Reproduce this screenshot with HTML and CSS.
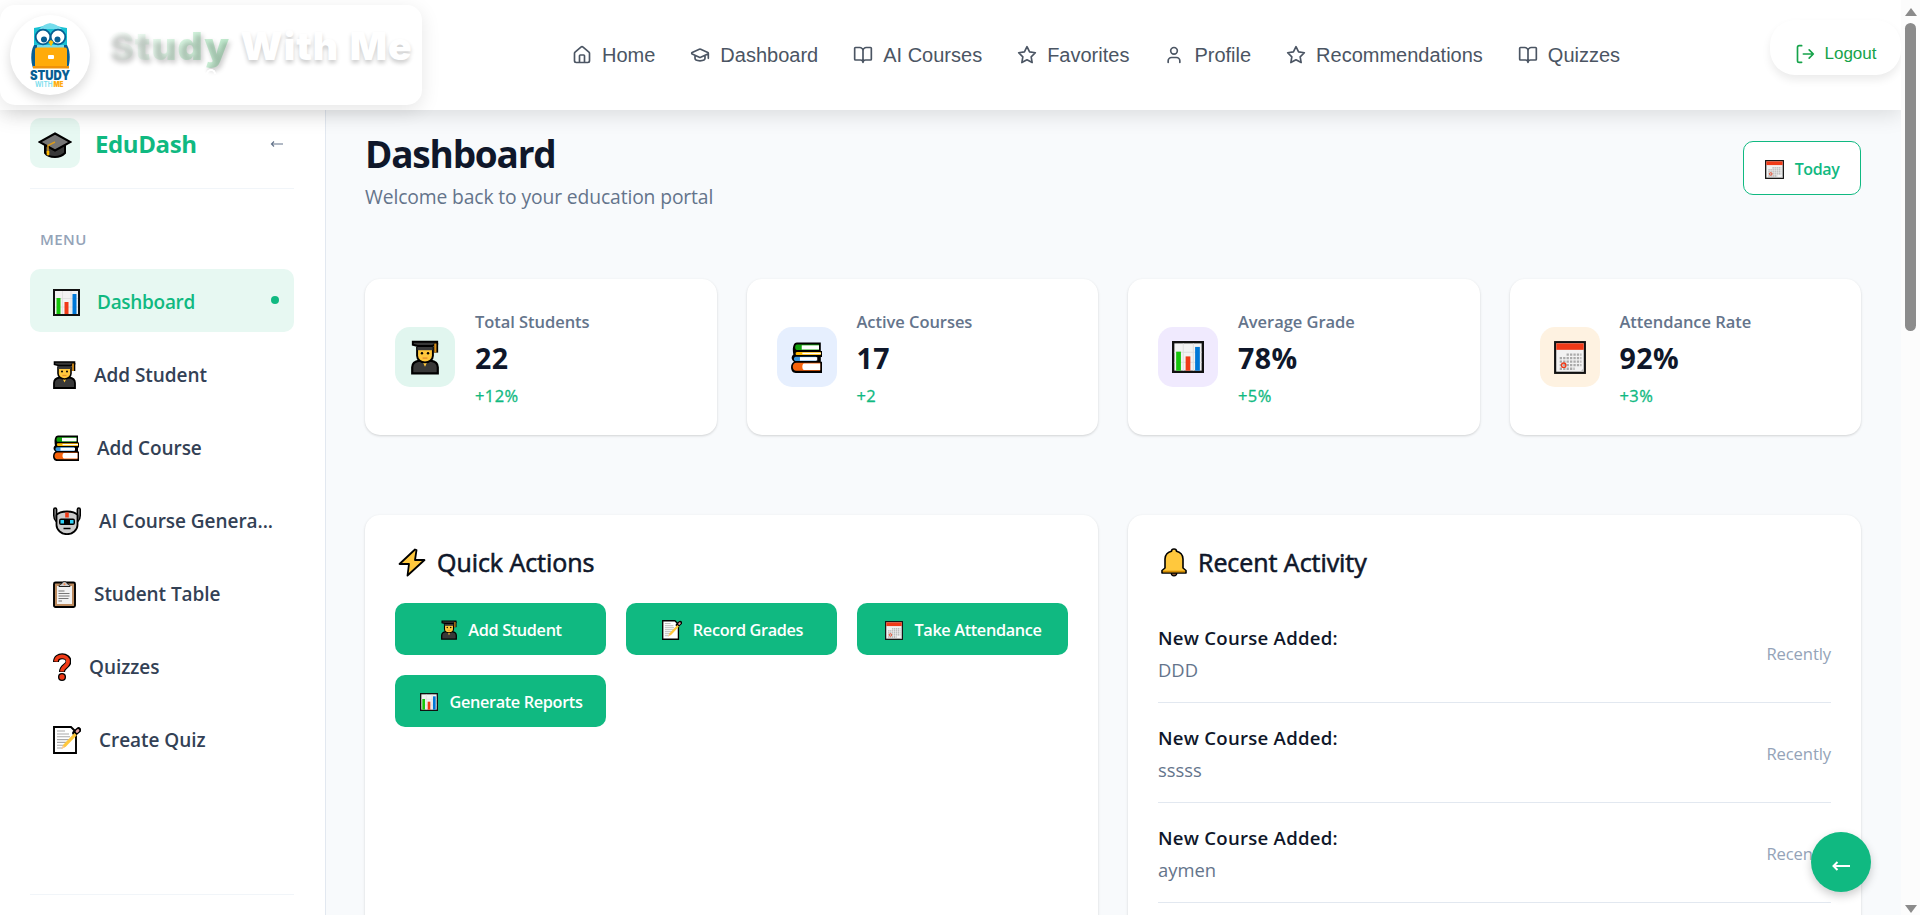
FILE: index.html
```html
<!DOCTYPE html>
<html lang="en">
<head>
<meta charset="utf-8">
<title>Study With Me - Dashboard</title>
<link rel="stylesheet" href="styles.css">
</head>
<body>
<svg class="sprite" width="0" height="0" aria-hidden="true">
  <symbol id="chart" viewBox="0 0 27 27" preserveAspectRatio="none">
    <rect x="1" y="1" width="25" height="25" fill="#f2f2f2" stroke="#111" stroke-width="2"/>
    <path d="M9.500 2v23M18 2v23M2 9.500h23M2 18h23" stroke="#ddd" stroke-width=".8"/>
    <rect x="3.500" y="9" width="4" height="16" fill="#16c60c"/><rect x="11.500" y="13" width="4" height="12" fill="#f03a17"/><rect x="19.500" y="5" width="4" height="20" fill="#0078d7"/>
  </symbol>
  <symbol id="student" viewBox="0 0 23 28">
    <path d="M1 27v-5c0-3 2.500-5 6-5.500h9c3.500.5 6 2.500 6 5.500v5z" fill="#383838" stroke="#000" stroke-width="1.800"/>
    <path d="M9 16.500h5l-2.500 5z" fill="#ffc83d"/>
    <path d="M5 6h13v6.500c0 3-3 5.500-6.500 5.500S5 15.500 5 12.500z" fill="#ffc83d" stroke="#000" stroke-width="1.600"/>
    <path d="M5.200 8V4h12.600v4z" fill="#383838"/>
    <path d="M1.500 1h20v2l-4 1.500h-12l-4-1z" fill="#383838" stroke="#000" stroke-width="1.600"/>
    <path d="M20.500 2v8" stroke="#000" stroke-width="3.600"/><path d="M20 2.500V10" stroke="#d8901c" stroke-width="1.800"/>
    <circle cx="9" cy="10.500" r="1" fill="#000"/><circle cx="14" cy="10.500" r="1" fill="#000"/><path d="M9.500 14.500h4" stroke="#e8912d" stroke-width="1.200"/>
  </symbol>
  <symbol id="books" viewBox="0 0 26 26" preserveAspectRatio="none">
    <path d="M5 .5h20v7h1v5h-1v4h1V26H4c-5 0-5-8-1.500-9.500C0 15 0 12 2 10.500 1 6.500 1.500.5 5 .5z" fill="#000"/>
    <path d="M5 2.200h18.500v4.600H5c-2 0-2-4.600 0-4.600z" fill="#13a10e"/><path d="M9 2.800h14.500v3.500H9z" fill="#fff"/>
    <path d="M5 8.300h20v2.700H5c-1.500 0-1.500-2.700 0-2.700z" fill="#ffb900"/><path d="M9.500 9h15.500v1.200H9.500z" fill="#fff"/>
    <path d="M4 12.300h17v3.600H4c-2 0-2-3.600 0-3.600z" fill="#3a96dd"/><path d="M7.500 12.700h14.500v2.900H7.500z" fill="#fff"/>
    <path d="M4.500 17.400h20v6.800H4.500c-4 0-4-6.800 0-6.800z" fill="#f7630c"/><path d="M11 18h13.500v5.400H11c-2 0-2-5.400 0-5.400z" fill="#fff"/>
  </symbol>
  <symbol id="robot" viewBox="0 0 28 28">
    <path d="M2.200 2.500v6c0 3 1 4 2 5M25.800 2.500v6c0 3-1 4-2 5" fill="none" stroke="#000" stroke-width="4.400" stroke-linecap="round"/>
    <path d="M2.200 2.500v6c0 3 1 4 2 5M25.800 2.500v6c0 3-1 4-2 5" fill="none" stroke="#767676" stroke-width="1.600" stroke-linecap="round"/>
    <path d="M3.500 8c2-2.500 5-3.500 10.500-3.500S22.500 5.500 24.500 8v10c0 5-5 9.200-10.500 9.200S3.500 23 3.500 18z" fill="#ccc" stroke="#000" stroke-width="1.800"/>
    <rect x="12.200" y="5.500" width="3.600" height="5" fill="#f03a17"/>
    <rect x="6" y="11.500" width="16" height="6.500" rx="2" fill="#000"/><rect x="7.500" y="13" width="3.500" height="3.500" fill="#31d2f7"/><rect x="17" y="13" width="3.500" height="3.500" fill="#31d2f7"/>
    <path d="M10.500 21.500h7" stroke="#000" stroke-width="1.500"/>
  </symbol>
  <symbol id="clipboard" viewBox="0 0 23 28">
    <rect x="1" y="2.500" width="21" height="24.500" rx="1.500" fill="#bc8b5f" stroke="#000" stroke-width="1.900"/>
    <path d="M4 6h15v18H4z" fill="#f2f2f2"/>
    <path d="M6 6.500c0-2 2-2.500 3-3C9.500 1 13.500 1 14 3.500c1 .5 3 1 3 3z" fill="#ccc" stroke="#222" stroke-width="1"/><circle cx="11.500" cy="4.300" r="1" fill="#f7894a"/>
    <path d="M5.500 11h6M5.500 13.500h11M5.500 16h11M5.500 18.500h10M5.500 21h3.500" stroke="#767676" stroke-width="1.100"/>
  </symbol>
  <symbol id="question" viewBox="0 0 18 28">
    <path d="M3 9c0-8 12.500-7.500 12.500-.5 0 5-6.500 4.500-6.500 10.500" fill="none" stroke="#000" stroke-width="6"/>
    <circle cx="9" cy="24" r="4" fill="#000"/>
    <path d="M2.800 8.500C3.300 1.500 15 2 15 8.500c0 5-6 5-6 10" fill="none" stroke="#f03a17" stroke-width="3.800"/><circle cx="9" cy="24" r="2.700" fill="#f03a17"/>
  </symbol>
  <symbol id="memo" viewBox="0 0 28 28">
    <path d="M1 1h17l5 5v21H1z" fill="#fff" stroke="#000" stroke-width="1.900"/>
    <path d="M4 5h8M4 8h12M4 10.800h13M4 13.600h13M4 16.400h12M4 19.200h8M4 22h5" stroke="#aaa" stroke-width="1.100"/>
    <path d="M22 7l3.500-3" stroke="#000" stroke-width="5.500" stroke-linecap="round"/><path d="M24 5.500l1-1" stroke="#e8a0a0" stroke-width="2.600" stroke-linecap="round"/>
    <path d="M8.500 23l2-4.500L21.500 7l2.300 2.200L13 20.500z" fill="#ffc83d"/><path d="M8.500 23l1.500-3.500 2 1.800z" fill="#f7c9a0"/>
  </symbol>
  <symbol id="calendar" viewBox="0 0 28 28" preserveAspectRatio="none">
    <rect x="1" y="1" width="26" height="26" fill="#f2f2f2" stroke="#111" stroke-width="1.900"/><path d="M2 2h24v5.500H2z" fill="#f03a17"/>
    <path d="M11 11.500h13M5 14.500h19M5 17.500h19M5 20.500h19M5 23.500h13" stroke="#aaa" stroke-width="2" stroke-dasharray="2 1"/>
    <circle cx="8.500" cy="20.500" r="1.900" fill="none" stroke="#f03a17" stroke-width="1.200"/><path d="M26 23v3h-3z" fill="#bbb"/>
  </symbol>
  <symbol id="cap" viewBox="0 0 34 26">
    <path d="M7 11v10c2 3 6 4 10 4s7-1 10-4V11z" fill="#383838" stroke="#000" stroke-width="2"/>
    <path d="M17 1.500L32.500 10 17 18.500 1.500 10z" fill="#767676" stroke="#000" stroke-width="2"/>
    <path d="M17 10l-7 3.500v10" fill="none" stroke="#d99a1c" stroke-width="1.500"/><path d="M10 19v4" stroke="#ffb900" stroke-width="2.600"/>
  </symbol>
  <symbol id="bolt" viewBox="0 0 28 29">
    <path d="M17 1.500L1.500 16h9.500L9.500 27.500 26.500 12h-9.500L18.500 2z" fill="#ffc83d" stroke="#000" stroke-width="1.800" stroke-linejoin="round"/>
  </symbol>
  <symbol id="bell" viewBox="0 0 26 29">
    <circle cx="13" cy="25" r="2.800" fill="#8e562e" stroke="#000" stroke-width="1.200"/>
    <path d="M4 20V11c0-4 3-7 6.500-7.800C10.500.2 15.500.2 15.500 3.200 19 4 22 7 22 11v9l3 2.500V25H1v-2.500z" fill="#ffc83d" stroke="#000" stroke-width="1.600" stroke-linejoin="round"/><path d="M2 23.500h22" stroke="#d48c00" stroke-width="1.600"/>
  </symbol>
  <symbol id="l-book" viewBox="0 0 24 24"><path d="M12 7v14M3 18a1 1 0 0 1-1-1V4a1 1 0 0 1 1-1h5a4 4 0 0 1 4 4 4 4 0 0 1 4-4h5a1 1 0 0 1 1 1v13a1 1 0 0 1-1 1h-6a3 3 0 0 0-3 3 3 3 0 0 0-3-3z"/></symbol>
  <symbol id="l-star" viewBox="0 0 24 24"><path d="M12 2l3.090 6.260L22 9.270l-5 4.870 1.180 6.880L12 17.770l-6.180 3.250L7 14.140 2 9.270l6.910-1.010z"/></symbol>
</svg>

<div class="window">
<div class="app">
  <header class="topbar">
    <div class="brand">
      <svg class="brand-logo" viewBox="0 0 80 80">
        <path d="M24 13c8-1 12-3 16-4.500C44 10 48 12 57 13v25H24z" fill="#19c1d3"/>
        <path d="M29 14c5-4 7-5.500 11-5.500S47 10 52 14z" fill="#74dcec"/>
        <path d="M24 30c-4 7-3 18-1 23h35c2-5 3-16-1-23z" fill="#075e93"/>
        <path d="M27 30h27v6H27z" fill="#74dcec"/>
        <circle cx="33" cy="22" r="7.300" fill="#fff" stroke="#075e93" stroke-width="1.800"/><circle cx="48" cy="22" r="7.300" fill="#fff" stroke="#075e93" stroke-width="1.800"/>
        <circle cx="34" cy="24.500" r="3" fill="#075e93"/><circle cx="47.500" cy="24.500" r="3" fill="#075e93"/>
        <path d="M38.500 27l2.500-2 2.500 2-2.500 4.500z" fill="#ffc107"/>
        <rect x="25" y="32.500" width="32" height="20.500" rx="2" fill="#ffab0a"/><path d="M23 51h36v2.500H23z" fill="#ef920a"/><rect x="38" y="40" width="6" height="4" rx="1" fill="#fff"/>
        <text x="20" y="64.500" textLength="40" lengthAdjust="spacingAndGlyphs" class="logo-word">STUDY</text>
        <text x="25" y="71.500" textLength="17.500" lengthAdjust="spacingAndGlyphs" class="logo-with">WITH</text>
        <text x="43.500" y="71.500" textLength="10" lengthAdjust="spacingAndGlyphs" class="logo-me">ME</text>
      </svg>
      <div class="brand-name"><span class="brand-study">Study</span> <span class="brand-rest">With Me</span><i class="brand-ring"></i></div>
    </div>
    <nav class="nav">
      <a><svg viewBox="0 0 24 24"><path d="M15 21v-8a1 1 0 0 0-1-1h-4a1 1 0 0 0-1 1v8M3 10a2 2 0 0 1 .7-1.500l7-6a2 2 0 0 1 2.600 0l7 6A2 2 0 0 1 21 10v9a2 2 0 0 1-2 2H5a2 2 0 0 1-2-2z"/></svg>Home</a>
      <a><svg viewBox="0 0 24 24"><path d="M21.400 10.900a1 1 0 0 0 0-1.800L12.800 5.200a2 2 0 0 0-1.600 0L2.600 9.100a1 1 0 0 0 0 1.800l8.600 3.900a2 2 0 0 0 1.600 0zM22 10v6M6 12.500V16a6 3 0 0 0 12 0v-3.500"/></svg>Dashboard</a>
      <a><svg><use href="#l-book"/></svg>AI Courses</a>
      <a><svg><use href="#l-star"/></svg>Favorites</a>
      <a><svg viewBox="0 0 24 24"><path d="M19 21v-2a4 4 0 0 0-4-4H9a4 4 0 0 0-4 4v2"/><circle cx="12" cy="7" r="4"/></svg>Profile</a>
      <a><svg><use href="#l-star"/></svg>Recommendations</a>
      <a><svg><use href="#l-book"/></svg>Quizzes</a>
    </nav>
    <button class="logout"><svg viewBox="0 0 24 24"><path d="M8 22H5a2 2 0 0 1-2-2V4a2 2 0 0 1 2-2h3M17 17l5-5-5-5M22 12H10"/></svg>Logout</button>
  </header>

  <div class="body">
    <aside class="sidebar">
      <div class="side-head">
        <span class="side-logo"><svg width="34" height="26"><use href="#cap"/></svg></span>
        <span class="side-title">EduDash</span>
        <svg class="side-arrow" viewBox="0 0 13 8"><path d="M13 4H1.500M4 1.500L1.500 4l2.500 2.500"/></svg>
      </div>
      <div class="side-label">MENU</div>
      <ul class="menu">
        <li class="active"><svg width="27" height="27"><use href="#chart"/></svg><span>Dashboard</span><i class="dot"></i></li>
        <li><svg width="23" height="28"><use href="#student"/></svg><span>Add Student</span></li>
        <li><svg width="26" height="26"><use href="#books"/></svg><span>Add Course</span></li>
        <li><svg width="28" height="28"><use href="#robot"/></svg><span>AI Course Genera...</span></li>
        <li><svg width="23" height="28"><use href="#clipboard"/></svg><span>Student Table</span></li>
        <li><svg width="18" height="28"><use href="#question"/></svg><span>Quizzes</span></li>
        <li><svg width="28" height="28"><use href="#memo"/></svg><span>Create Quiz</span></li>
      </ul>
      <div class="side-foot"></div>
    </aside>

    <main class="main">
      <div class="page-head">
        <div>
          <h1>Dashboard</h1>
          <p>Welcome back to your education portal</p>
        </div>
        <button class="today"><svg width="19" height="19"><use href="#calendar"/></svg>Today</button>
      </div>

      <section class="stats">
        <div class="stat"><span class="stat-icon green"><svg width="28" height="35"><use href="#student"/></svg></span><div class="stat-text"><span class="stat-label">Total Students</span><b>22</b><span class="stat-change">+12%</span></div></div>
        <div class="stat"><span class="stat-icon blue"><svg width="31" height="31"><use href="#books"/></svg></span><div class="stat-text"><span class="stat-label">Active Courses</span><b>17</b><span class="stat-change">+2</span></div></div>
        <div class="stat"><span class="stat-icon violet"><svg width="32" height="32"><use href="#chart"/></svg></span><div class="stat-text"><span class="stat-label">Average Grade</span><b>78%</b><span class="stat-change">+5%</span></div></div>
        <div class="stat"><span class="stat-icon orange"><svg width="32" height="33"><use href="#calendar"/></svg></span><div class="stat-text"><span class="stat-label">Attendance Rate</span><b>92%</b><span class="stat-change">+3%</span></div></div>
      </section>

      <section class="panels">
        <div class="panel">
          <h2><svg width="28" height="29"><use href="#bolt"/></svg>Quick Actions</h2>
          <div class="actions">
            <button><svg width="16" height="20"><use href="#student"/></svg>Add Student</button>
            <button><svg width="20" height="20"><use href="#memo"/></svg>Record Grades</button>
            <button><svg width="18" height="19"><use href="#calendar"/></svg>Take Attendance</button>
            <button><svg width="18" height="18"><use href="#chart"/></svg>Generate Reports</button>
          </div>
        </div>
        <div class="panel">
          <h2><svg width="26" height="29"><use href="#bell"/></svg>Recent Activity</h2>
          <div class="feed">
            <div class="entry"><div><strong>New Course Added:</strong><p>DDD</p></div><time>Recently</time></div>
            <div class="entry"><div><strong>New Course Added:</strong><p>sssss</p></div><time>Recently</time></div>
            <div class="entry"><div><strong>New Course Added:</strong><p>aymen</p></div><time>Recently</time></div>
          </div>
        </div>
      </section>
    </main>
  </div>
  <button class="fab"><svg viewBox="0 0 18 10"><path d="M18 5H2M5.500 1L1.500 5l4 4"/></svg></button>
</div>
<div class="scrollbar"><i class="up"></i><i class="thumb"></i><i class="down"></i></div>
</div>
</body>
</html>
```
FILE: styles.css
```css
* { box-sizing: border-box; }
body { margin: 0; font-family: "Open Sans", "Noto Sans", sans-serif; color: #0f172a; background: #f8fafc; overflow: hidden; }
button { font: inherit; border: 0; cursor: pointer; }
h1, h2, p, ul { margin: 0; padding: 0; }
svg { flex: none; display: block; }
.sprite { position: absolute; }
.window { display: flex; height: 915px; }
.app { flex: 1; display: flex; flex-direction: column; min-width: 0; position: relative; overflow: hidden; }

/* top bar */
.topbar { position: relative; z-index: 5; height: 110px; flex: none; display: flex; align-items: flex-start; background: #fff; box-shadow: 0 5px 20px rgba(0, 0, 0, .12); font-family: "Liberation Sans", Arial, sans-serif; }
.brand { width: 422px; height: 100px; margin-top: 5px; padding-left: 10px; display: flex; align-items: center; border-radius: 15px; background: #fff; box-shadow: 0 5px 19px rgba(0, 0, 0, .1); }
.brand-logo { width: 80px; height: 80px; border-radius: 50%; background: #fff; box-shadow: 0 5px 12px rgba(0, 0, 0, .15); }
.logo-word { font: 900 13px Inter, sans-serif; fill: #075e93; }
.logo-with { font: 600 7.500px Inter, sans-serif; fill: #74dcec; }
.logo-me { font: 900 7.500px Inter, sans-serif; fill: #ffab0a; }
.brand-name { position: relative; margin: -18px 0 0 18px; font: 900 39px/50px Inter, "Liberation Sans", sans-serif; white-space: nowrap; letter-spacing: .9px; word-spacing: 2px; }
.brand-study { color: transparent; background: linear-gradient(90deg, #fff, #d8f5e1 60%, #c0ecce); background-clip: text; -webkit-background-clip: text; text-shadow: 2px 3px 5px rgba(0, 0, 0, .2); }
.brand-rest { color: #fff; text-shadow: 0 3px 4px rgba(0, 0, 0, .2); }
.brand-ring { position: absolute; left: 98px; top: 48px; width: 10px; height: 5px; border: 2px solid #fff; border-bottom: 0; border-radius: 6px 6px 0 0; box-shadow: 0 -1px 2px rgba(0, 0, 0, .06); }
.nav { display: flex; gap: 35px; margin: 41px 0 0 150px; color: #4b5563; font-size: 20px; line-height: 28px; white-space: nowrap; }
.nav a { display: flex; align-items: center; gap: 10px; }
.nav svg, .logout svg { width: 20px; height: 20px; fill: none; stroke: currentColor; stroke-width: 2; stroke-linecap: round; stroke-linejoin: round; }
.logout { margin: 20px 0 0 auto; width: 131px; height: 55px; border-radius: 25px; padding: 13px 0 0; display: flex; align-items: center; justify-content: center; gap: 10px; line-height: 20px; background: #fff; color: #16a34a; font-size: 17px; box-shadow: 0 5px 8px rgba(0, 0, 0, .08); }

.body { flex: 1; display: flex; min-height: 0; }

/* sidebar */
.sidebar { width: 326px; flex: none; padding: 8px 31px 0 30px; background: #fff; border-right: 1px solid #e2e8f0; box-shadow: 1px 0 3px rgba(0, 0, 0, .06); display: flex; flex-direction: column; }
.side-head { height: 71px; display: flex; align-items: flex-start; border-bottom: 1px solid #f1f5f9; }
.side-logo { width: 50px; height: 50px; border-radius: 10px; background: #e7f8f2; display: flex; align-items: center; justify-content: center; }
.side-logo svg { margin-top: 4px; }
.side-title { margin-left: 15px; font-size: 24px; line-height: 51px; font-weight: 700; color: #10b981; letter-spacing: -.4px; }
.side-arrow { width: 13px; height: 8px; margin: 22px 11px 0 auto; fill: none; stroke: #64748b; stroke-width: 1.200; }
.side-label { margin: 38px 0 18px 10px; font-size: 15px; line-height: 24px; font-weight: 600; color: #94a3b8; letter-spacing: .4px; }
.menu { list-style: none; display: flex; flex-direction: column; gap: 10px; font-size: 19px; font-weight: 600; color: #334155; letter-spacing: -.05px; }
.menu li { height: 63px; padding: 3px 15px 0 23px; display: flex; align-items: center; gap: 18px; border-radius: 10px; white-space: nowrap; }
.menu span { line-height: 60px; }
.menu .active { background: #e7f8f2; color: #10b981; letter-spacing: -.3px; gap: 17px; }
.dot { width: 8px; height: 8px; border-radius: 50%; background: #10b981; margin: -4px 0 0 auto; }
.side-foot { margin-top: 124px; border-top: 1px solid #f1f5f9; }

/* main column */
.main { flex: 1; min-width: 0; padding: 19px 40px 0 39px; background: #f8fafc; }
.page-head { height: 150px; display: flex; justify-content: space-between; align-items: flex-start; }
h1 { font-size: 37px; line-height: 50px; font-weight: 700; letter-spacing: -1.200px; }
.page-head p { margin-top: 3px; font-size: 19.300px; line-height: 30px; color: #64748b; letter-spacing: -.12px; }
.today { margin-top: 12px; width: 118px; height: 54px; border: 1px solid #10b981; border-radius: 10px; background: #fff; color: #10b981; font-size: 16px; font-weight: 600; letter-spacing: -.4px; display: flex; align-items: center; justify-content: center; gap: 11px; padding: 2px 0 0; }
.stats { display: grid; grid-template-columns: repeat(4, 1fr); gap: 30px; }
.stat, .panel { background: #fff; border-radius: 15px; box-shadow: 0 1px 3px rgba(0, 0, 0, .13), 0 1px 2px rgba(0, 0, 0, .04); }
.stat { height: 156px; padding: 2px 30px 0; display: flex; align-items: center; gap: 20px; }
.stat-icon { width: 60px; height: 60px; margin-top: -2px; border-radius: 15px; display: flex; align-items: center; justify-content: center; }
.green { background: #e1f6ef; }
.blue { background: #e6effe; }
.violet { background: #f0eafe; }
.orange { background: #fef2e1; }
.stat-text { display: flex; flex-direction: column; padding-top: 1px; }
.stat-label { font-size: 16.500px; line-height: 24px; font-weight: 600; color: #64748b; letter-spacing: -.05px; }
.stat b { margin: 3px 0 5px; font-size: 28.500px; line-height: 42px; letter-spacing: .5px; }
.stat-change { font-size: 16.500px; line-height: 23px; font-weight: 400; color: #10b981; letter-spacing: .4px; -webkit-text-stroke: .3px #10b981; }

/* panels */
.panels { margin-top: 80px; display: grid; grid-template-columns: 1fr 1fr; gap: 30px; }
.panel { height: 460px; padding: 29px 30px; }
h2 { display: flex; align-items: center; gap: 11px; margin: 0 0 22px 3px; font-size: 25px; line-height: 37px; font-weight: 400; letter-spacing: -.05px; -webkit-text-stroke: .6px #0f172a; }
.actions { display: grid; grid-template-columns: repeat(3, 1fr); gap: 20px; }
.actions button { height: 52px; border-radius: 10px; background: #10b981; color: #fff; font-size: 16.300px; font-weight: 600; letter-spacing: -.35px; display: flex; align-items: center; justify-content: center; gap: 11px; padding: 2px 0 0 2px; white-space: nowrap; }
.entry { height: 100px; padding-bottom: 1px; padding-top: 3px; display: flex; justify-content: space-between; align-items: center; border-bottom: 1px solid #e2e8f0; line-height: 32px; }
.entry strong { display: block; font-size: 18.600px; font-weight: 600; letter-spacing: .25px; line-height: 31px; padding-bottom: 1px; }
.entry p { font-size: 18.400px; color: #64748b; }
.entry time { font-size: 16.600px; color: #94a3b8; letter-spacing: -.1px; }

.fab { position: absolute; z-index: 6; right: 30px; bottom: 23px; width: 60px; height: 60px; border-radius: 50%; padding: 7px 0 0; background: #10b981; display: flex; align-items: center; justify-content: center; box-shadow: 0 4px 10px rgba(0, 0, 0, .2); }
.fab svg { width: 18px; height: 10px; fill: none; stroke: #fff; stroke-width: 2; }

/* scrollbar */
.scrollbar { width: 19px; flex: none; background: #fcfcfc; display: flex; flex-direction: column; align-items: center; padding: 8px 0 2px; }
.up, .down { border: 6.500px solid transparent; border-top: 0; border-bottom: 8px solid #8b8b8b; }
.thumb { width: 11px; height: 308px; margin-top: 7px; border-radius: 6px; background: #8b8b8b; }
.down { margin-top: auto; border-bottom: 0; border-top: 8px solid #8b8b8b; }
```
